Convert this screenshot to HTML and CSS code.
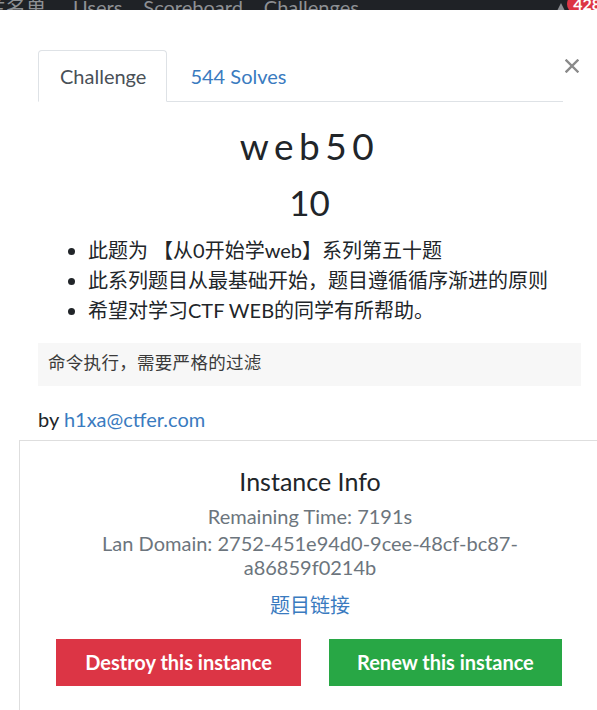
FILE: index.html
```html
<!DOCTYPE html>
<html lang="zh-CN">
<head>
<meta charset="utf-8">
<title>web50</title>
<link rel="stylesheet" href="styles.css">
</head>
<body>
<nav class="topnav">
  <span class="nav-item nav-first">兰名单</span>
  <span class="nav-item">Users</span>
  <span class="nav-item">Scoreboard</span>
  <span class="nav-item">Challenges</span>
  <span class="nav-right"><span class="nav-icon"></span><span class="badge">428</span></span>
</nav>
<div class="modal">
  <button class="close" aria-label="Close">
    <svg width="14" height="14" viewBox="0 0 14 14"><path d="M1.5 1.5 L12.5 12.5 M12.5 1.5 L1.5 12.5" stroke="#8a8a8a" stroke-width="2.4" stroke-linecap="square" fill="none"/></svg>
  </button>
  <div class="modal-body">
    <ul class="tabs">
      <li class="tab active">Challenge</li>
      <li class="tab"><a class="tab-link" href="#">544 Solves</a></li>
    </ul>
    <h2 class="chal-name">web50</h2>
    <h3 class="chal-value">10</h3>
    <ul class="desc">
      <li>此题为 【从0开始学web】系列第五十题</li>
      <li>此系列题目从最基础开始，题目遵循循序渐进的原则</li>
      <li>希望对学习CTF WEB的同学有所帮助。</li>
    </ul>
    <pre class="hint">命令执行，需要严格的过滤</pre>
    <p class="author">by <a class="link" href="#">h1xa@ctfer.com</a></p>
    <div class="instance">
      <h4 class="inst-title">Instance Info</h4>
      <p class="muted">Remaining Time: 7191s</p>
      <p class="muted lan">Lan Domain: 2752-451e94d0-9cee-48cf-bc87-a86859f0214b</p>
      <a class="link inst-link" href="#">题目链接</a>
      <div class="btns">
        <button class="btn btn-red">Destroy this instance</button>
        <button class="btn btn-green">Renew this instance</button>
      </div>
    </div>
  </div>
</div>
</body>
</html>
```
FILE: styles.css
```css
html, body {
  margin: 0;
  padding: 0;
}
body {
  font-family: Lato, "Noto Sans CJK SC", sans-serif;
  font-size: 20px;
  line-height: 1.5;
  color: #212529;
  background: #ffffff;
  overflow: hidden;
  width: 597px;
  height: 710px;
}
.topnav {
  height: 10px;
  background: #1f2226;
  overflow: hidden;
  display: flex;
  align-items: flex-start;
  gap: 21px;
  position: relative;
}
.nav-item {
  color: #8d9094;
  font-size: 20px;
  line-height: 24px;
  margin-top: -5px;
  white-space: nowrap;
}
.nav-first {
  margin-left: -14px;
  margin-right: 6px;
}
.nav-right {
  margin-left: auto;
  display: flex;
  align-items: flex-start;
  gap: 2px;
  margin-right: -10px;
}
.nav-icon {
  width: 0;
  height: 0;
  margin-top: 3px;
  border-left: 4px solid transparent;
  border-right: 4px solid transparent;
  border-bottom: 8px solid #8a8d91;
}
.badge {
  background: #dc3545;
  color: #ffffff;
  font-size: 16px;
  font-weight: 700;
  line-height: 20px;
  padding: 0 6px;
  border-radius: 10px;
  margin-top: -6px;
}
.modal {
  position: relative;
  background: #ffffff;
}
.close {
  position: absolute;
  top: 49px;
  right: 18px;
  border: 0;
  background: transparent;
  padding: 0;
  width: 14px;
  height: 14px;
  cursor: pointer;
}
.close svg {
  display: block;
}
.modal-body {
  padding: 40px 16px 0 38px;
}
.tabs {
  list-style: none;
  margin: 0 18px 0 0;
  padding: 0;
  display: flex;
  border-bottom: 1px solid #dee2e6;
}
.tab {
  padding: 10px 21px 10px 22px;
  border: 1px solid transparent;
  border-radius: 4px 4px 0 0;
  margin-bottom: -1px;
  line-height: 30px;
}
.tab.active {
  color: #495057;
  border-color: #dee2e6 #dee2e6 #ffffff;
  padding: 10px 20px 10px 21px;
  background: #ffffff;
}
.tab-link, .link {
  color: #3a7bbf;
  text-decoration: none;
}
.chal-name {
  margin: 22px 0 0;
  text-align: center;
  font-weight: 400;
  font-size: 37px;
  line-height: 1.2;
  letter-spacing: 5.5px;
}
.chal-value {
  margin: 13px 0 0;
  text-align: center;
  font-weight: 400;
  font-size: 35px;
  line-height: 1.2;
}
.desc {
  margin: 12px 0 18px;
  padding-left: 50px;
  line-height: 30px;
}
.hint {
  margin: 0;
  background: #f7f7f7;
  padding: 9px 10px;
  font-family: "Liberation Mono", "Noto Sans CJK SC", monospace;
  font-size: 17.5px;
  line-height: 25px;
  letter-spacing: 0.3px;
  color: #3a3a3a;
}
.author {
  margin: 18px 0 6px;
  line-height: 30px;
}
.instance {
  margin: 0 -20px 0 -19px;
  border: 1px solid #dedede;
  padding: 25px 24px 40px 24px;
  text-align: center;
}
.inst-title {
  margin: 0;
  font-size: 25px;
  font-weight: 400;
  line-height: 1.22;
}
.muted {
  margin: 7px 0 0;
  color: #6c757d;
  line-height: 24px;
}
.lan {
  margin-top: 3px;
}
.inst-link {
  display: block;
  margin-top: 14px;
  line-height: 24px;
}
.btns {
  display: flex;
  justify-content: center;
  gap: 28px;
  margin-top: 22px;
  margin-left: -2px;
}
.btn {
  border: 0;
  border-radius: 0;
  color: #ffffff;
  font-family: Lato, "Noto Sans CJK SC", sans-serif;
  font-size: 20px;
  font-weight: 700;
  height: 47px;
  padding: 0 28px;
  line-height: 47px;
}
.btn-red {
  background: #dc3545;
  padding: 0 29px;
}
.btn-green {
  background: #28a745;
}
```
